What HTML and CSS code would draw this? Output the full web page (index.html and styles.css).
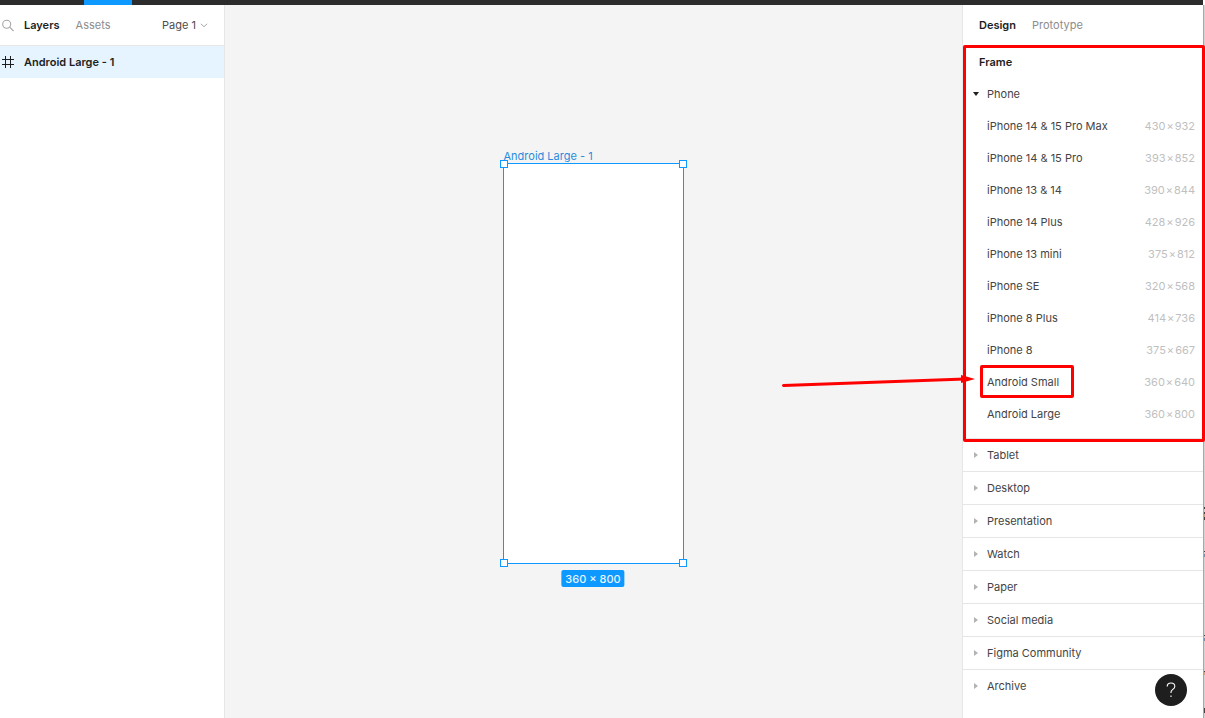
FILE: index.html
```html
<!DOCTYPE html>
<html lang="en">
<head>
<meta charset="utf-8">
<title>Android Large - 1</title>
<link rel="stylesheet" href="styles.css">
</head>
<body>
<header class="toolbar"><span class="toolbar-active"></span></header>
<div class="workspace">
  <aside class="layers-panel">
    <div class="panel-tabs">
      <button class="icon-button" aria-label="Search"><svg width="13" height="13" viewBox="0 0 13 13" fill="none" stroke="#a6a6a6" stroke-width="1.1"><circle cx="4.700" cy="5.200" r="4"/><path d="M7.700 8.200 11.500 12"/></svg></button>
      <button class="tab tab-current">Layers</button>
      <button class="tab">Assets</button>
      <button class="page-picker">Page 1 <svg width="8" height="5" viewBox="0 0 8 5" fill="none" stroke="#a0a0a0"><path d="M1 .8 4 3.8 7 .8"/></svg></button>
    </div>
    <button class="layer-row"><svg width="12" height="12" viewBox="0 0 12 12" fill="none" stroke="#1e1e1e"><path d="M3.5 0v12M8.5 0v12M0 3.5h12M0 8.5h12"/></svg><span>Android Large - 1</span></button>
  </aside>

  <main class="canvas">
    <div class="frame">
      <span class="frame-name">Android Large - 1</span>
      <i class="handle top left"></i><i class="handle top right"></i>
      <i class="handle bottom left"></i><i class="handle bottom right"></i>
      <span class="frame-size">360 × 800</span>
    </div>
  </main>

  <aside class="design-panel">
    <div class="panel-tabs design-tabs">
      <button class="tab tab-current">Design</button>
      <button class="tab">Prototype</button>
    </div>
    <section class="frame-presets">
      <h2 class="title">Frame</h2>
      <button class="group-head"><svg class="caret" width="6" height="4" viewBox="0 0 6 4"><path d="M0 0h6L3 4z" fill="#1e1e1e"/></svg>Phone</button>
      <button class="preset"><span>iPhone 14 &amp; 15 Pro Max</span><span class="dims">430<i>×</i>932</span></button>
      <button class="preset"><span>iPhone 14 &amp; 15 Pro</span><span class="dims">393<i>×</i>852</span></button>
      <button class="preset"><span>iPhone 13 &amp; 14</span><span class="dims">390<i>×</i>844</span></button>
      <button class="preset"><span>iPhone 14 Plus</span><span class="dims">428<i>×</i>926</span></button>
      <button class="preset"><span>iPhone 13 mini</span><span class="dims">375<i>×</i>812</span></button>
      <button class="preset"><span>iPhone SE</span><span class="dims">320<i>×</i>568</span></button>
      <button class="preset"><span>iPhone 8 Plus</span><span class="dims">414<i>×</i>736</span></button>
      <button class="preset"><span>iPhone 8</span><span class="dims">375<i>×</i>667</span></button>
      <button class="preset marked"><span>Android Small</span><span class="dims">360<i>×</i>640</span>
        <svg class="arrow" width="194" height="14" viewBox="0 0 194 14"><path d="M2.500 10.500 184 4" stroke="#f00" stroke-width="3" stroke-linecap="round"/><path d="M180 0 194 4 180 8z" fill="#f00"/></svg>
      </button>
      <button class="preset"><span>Android Large</span><span class="dims">360<i>×</i>800</span></button>
    </section>
    <nav class="groups">
      <button class="group"><svg class="caret" width="4" height="6" viewBox="0 0 4 6"><path d="M0 0v6l4-3z" fill="#b3b3b3"/></svg>Tablet</button>
      <button class="group"><svg class="caret" width="4" height="6" viewBox="0 0 4 6"><path d="M0 0v6l4-3z" fill="#b3b3b3"/></svg>Desktop</button>
      <button class="group"><svg class="caret" width="4" height="6" viewBox="0 0 4 6"><path d="M0 0v6l4-3z" fill="#b3b3b3"/></svg>Presentation</button>
      <button class="group"><svg class="caret" width="4" height="6" viewBox="0 0 4 6"><path d="M0 0v6l4-3z" fill="#b3b3b3"/></svg>Watch</button>
      <button class="group"><svg class="caret" width="4" height="6" viewBox="0 0 4 6"><path d="M0 0v6l4-3z" fill="#b3b3b3"/></svg>Paper</button>
      <button class="group"><svg class="caret" width="4" height="6" viewBox="0 0 4 6"><path d="M0 0v6l4-3z" fill="#b3b3b3"/></svg>Social media</button>
      <button class="group"><svg class="caret" width="4" height="6" viewBox="0 0 4 6"><path d="M0 0v6l4-3z" fill="#b3b3b3"/></svg>Figma Community</button>
      <button class="group"><svg class="caret" width="4" height="6" viewBox="0 0 4 6"><path d="M0 0v6l4-3z" fill="#b3b3b3"/></svg>Archive</button>
    </nav>
  </aside>
  <svg class="window-edge" width="2" height="713" viewBox="0 0 2 713"><path d="M.5 0v713" stroke="#a8a8a8"/><path d="M1.500 0v713" stroke="#d4d4d4"/><path d="M1.500 502v2m0 3v2m0 3v3m0 31v1m0 83v1m0 3v2m0 30v1m0 36v5" stroke="#444"/><path d="M1.500 509v3m0 155v3" stroke="#c9a27c"/><path d="M1.500 549v3m0 81v3" stroke="#6d8fb3"/></svg>
</div>
<button class="help" aria-label="Help"><svg width="10" height="16" viewBox="0 0 10 16" fill="none" stroke="#fff" stroke-width="1.100"><path d="M1.200 4.500C1.200 2.300 2.800 1 5 1s3.800 1.300 3.800 3.400c0 2.800-3.800 3-3.800 5.600v1"/><path d="M5 13.500v1.500"/></svg></button>
</body>
</html>
```
FILE: styles.css
```css
*, *::before, *::after { box-sizing: border-box; }

body {
  margin: 0;
  min-height: 100vh;
  display: flex;
  flex-direction: column;
  overflow: hidden;
  background: #fff;
  color: #444;
  font: 11px/16px Inter, "Liberation Sans", sans-serif;
}

button {
  margin: 0;
  padding: 0;
  border: 0;
  background: none;
  color: inherit;
  font: inherit;
  text-align: left;
}

svg { display: block; flex: none; }

.toolbar {
  height: 5px;
  margin-right: 2px;
  padding-left: 84px;
  background: #2c2c2c;
}
.toolbar-active {
  display: block;
  width: 48px;
  height: 5px;
  background: #0d99ff;
}

.workspace { flex: 1; display: flex; }

.layers-panel {
  width: 225px;
  flex: none;
  border-right: 1px solid #e6e6e6;
}

.panel-tabs {
  height: 41px;
  display: flex;
  align-items: center;
  gap: 16px;
  padding: 0 16px 0 2px;
  border-bottom: 1px solid #e6e6e6;
}
.icon-button { width: 13px; margin-right: -7px; }
.tab { color: #8c8c8c; }
.tab-current { color: #1e1e1e; font-weight: 600; }
.page-picker {
  display: flex;
  align-items: center;
  gap: 4px;
  margin-left: auto;
  color: #4d4d4d;
}

.layer-row {
  width: 100%;
  height: 32px;
  display: flex;
  align-items: center;
  gap: 10px;
  padding-left: 2px;
  background: #e5f4ff;
  color: #1e1e1e;
  font-weight: 600;
}

.canvas {
  flex: 1;
  position: relative;
  background: #f4f4f4;
}
.frame {
  position: absolute;
  top: 158px;
  left: 50%;
  width: 181px;
  height: 401px;
  margin-left: -91px;
  border: 1px solid #0d99ff;
  background: #fff;
}
.frame-name {
  position: absolute;
  left: 0;
  bottom: 100%;
  white-space: nowrap;
  color: #2a8bdb;
}
.handle {
  position: absolute;
  width: 8px;
  height: 8px;
  border: 1px solid #0d99ff;
  background: #fff;
}
.top { top: -4px; }
.bottom { bottom: -4px; }
.left { left: -4px; }
.right { right: -4px; }
.frame-size {
  position: absolute;
  top: 406px;
  left: 50%;
  transform: translateX(-50%);
  padding: 1px 4px 0;
  border-radius: 2px;
  background: #0d99ff;
  color: #e6f4ff;
  font-weight: 500;
  white-space: nowrap;
}

.design-panel {
  width: 241px;
  flex: none;
  border-left: 1px solid #e6e6e6;
}
.design-tabs { padding-left: 16px; }
.window-edge { width: 2px; }

.frame-presets {
  position: relative;
  padding-bottom: 8px;
  border-bottom: 1px solid #e6e6e6;
}
.frame-presets::after {
  content: "";
  position: absolute;
  z-index: 1;
  inset: -1px -2px -4px 0;
  border: 3px solid #f00;
  border-radius: 2px;
  pointer-events: none;
}
.title {
  margin: 0;
  padding: 8px 16px;
  font-size: 11px;
  font-weight: 600;
  color: #1e1e1e;
}
.group-head, .preset, .group {
  position: relative;
  width: 100%;
  height: 32px;
  display: flex;
  align-items: center;
  justify-content: space-between;
  padding: 0 8px 0 24px;
}
.group-head, .group { justify-content: flex-start; }
.caret { width: 6px; margin: 0 8px 0 -14px; }
.dims { color: #bfbfbf; }
.dims i { margin: 0 1px; font-style: normal; }

.marked::before {
  content: "";
  position: absolute;
  top: -1px;
  left: 17px;
  width: 94px;
  height: 33px;
  border: 3px solid #f00;
  border-radius: 2px;
}
.arrow {
  position: absolute;
  z-index: 2;
  top: 9px;
  left: -182px;
}

.group { height: 33px; border-bottom: 1px solid #e6e6e6; }
.group:last-child { border-bottom-color: transparent; }

.help {
  position: fixed;
  right: 18px;
  bottom: 12px;
  width: 32px;
  height: 32px;
  display: grid;
  place-items: center;
  border-radius: 50%;
  background: #1e1e1e;
}
```
